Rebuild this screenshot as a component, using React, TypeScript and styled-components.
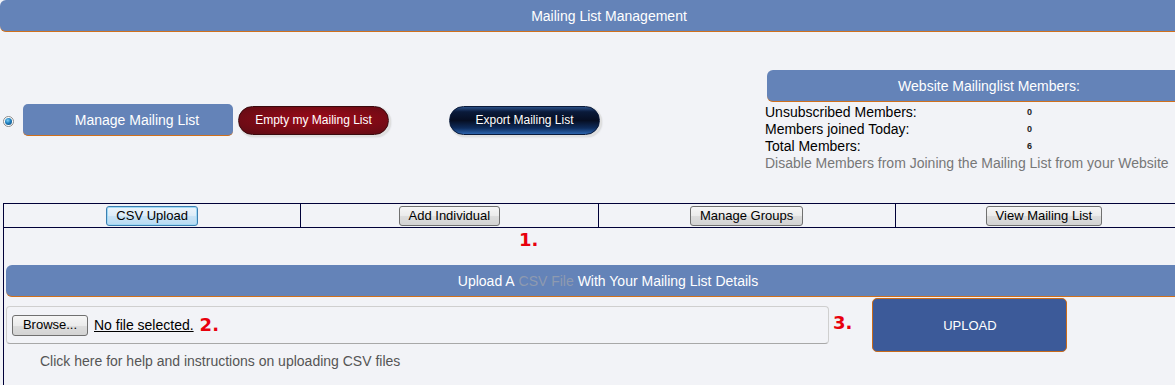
import React from "react";
import styled, { createGlobalStyle } from "styled-components";

const GlobalStyle = createGlobalStyle`
  html, body { margin: 0; padding: 0; background: #f2f3f7; overflow: hidden; }
  body { font-family: "Liberation Sans", Arial, sans-serif; color: #000; }
`;

const Page = styled.div`
  width: 1218px;
`;

const BlueBar = styled.div<{ $width?: number }>`
  box-sizing: border-box;
  width: ${(p) => (p.$width ? `${p.$width}px` : "100%")};
  height: 32px;
  background: #6483b8;
  border-bottom: 1px solid #d0701c;
  border-radius: 6px;
  color: #fff;
  font-size: 14px;
  display: flex;
  align-items: center;
  justify-content: center;
`;

const Muted = styled.span`
  color: #8e9ab0;
`;

const TopSection = styled.div`
  display: grid;
  grid-template-columns: 765px 1fr;
  height: 171px;
`;

const ActionGroup = styled.div`
  display: flex;
  align-items: center;
  align-self: start;
  margin-top: 72px;
  padding-left: 3px;
`;

const Radio = styled.span`
  box-sizing: border-box;
  width: 11px;
  height: 11px;
  border-radius: 50%;
  border: 1px solid #8a8a8a;
  background: #fff;
  display: flex;
  align-items: center;
  justify-content: center;
  margin-top: 3px;
  &::after {
    content: "";
    width: 7px;
    height: 7px;
    border-radius: 50%;
    background: radial-gradient(circle at 40% 35%, #7fd0f5 0%, #1f7fbf 45%, #0b3d6b 100%);
  }
`;

const ManageButton = styled.button`
  box-sizing: border-box;
  margin-left: 9px;
  width: 210px;
  height: 32px;
  border: none;
  border-bottom: 1px solid #d0701c;
  border-radius: 5px;
  background: #6483b8;
  color: #fff;
  font-family: inherit;
  font-size: 14px;
  padding: 0 0 0 18px;
`;

const PillButton = styled.button<{ $tone: "red" | "navy"; $gap: number }>`
  box-sizing: border-box;
  margin-left: ${(p) => p.$gap}px;
  width: 151px;
  height: 29px;
  border-radius: 15px;
  border: 1px solid ${(p) => (p.$tone === "red" ? "#3a0a0e" : "#0a1a3a")};
  box-shadow: 1px 1px 0 1px #e0e0e0, 2px 2px 2px rgba(0, 0, 0, 0.15);
  background: ${(p) =>
    p.$tone === "red"
      ? "radial-gradient(ellipse at 55% 45%, #9c0a1a 0%, #820a16 45%, #5a0c14 100%)"
      : "linear-gradient(to bottom, #2a4f86 0%, #0a1a3a 18%, #060e22 50%, #0e2c5c 78%, #2c64ae 100%)"};
  color: #fff;
  font-family: inherit;
  font-size: 12px;
  padding: 0;
`;

const StatsColumn = styled.div`
  display: flex;
  flex-direction: column;
`;

const StatsPanel = styled(BlueBar)`
  margin-top: 38px;
  margin-left: 2px;
  width: 444px;
`;

const StatsGrid = styled.div`
  display: grid;
  grid-template-columns: 262px auto;
  margin-top: 2px;
  font-size: 14px;
  line-height: 17px;
`;

const StatValue = styled.span`
  font-size: 9px;
  line-height: 17px;
  font-weight: bold;
  color: #222;
`;

const StatNote = styled.div`
  grid-column: 1 / span 2;
  color: #777;
  white-space: nowrap;
`;

const Tabs = styled.table`
  margin-left: 3px;
  width: 1190px;
  border-collapse: collapse;
  table-layout: fixed;
  border: 1px solid #000038;
`;

const TabCell = styled.td`
  border: 1px solid #000038;
  height: 23px;
  padding: 0;
  text-align: center;
  vertical-align: middle;
`;

const BodyCell = styled.td`
  border-left: 1px solid #000038;
  padding: 0 0 20px 2px;
  vertical-align: top;
`;

const SysButton = styled.button<{ $focused?: boolean }>`
  box-sizing: border-box;
  height: 20px;
  padding: 0 9px;
  border-radius: 3px;
  border: 1px solid ${(p) => (p.$focused ? "#3c7fb1" : "#707070")};
  box-shadow: ${(p) => (p.$focused ? "inset 0 0 0 1px #9fd8f5" : "none")};
  background: ${(p) =>
    p.$focused
      ? "linear-gradient(to bottom, #edf5fb 0%, #dcecf8 50%, #c9e3f5 51%, #b9dbf2 100%)"
      : "linear-gradient(to bottom, #f6f6f6 0%, #ebebeb 50%, #dddddd 51%, #d3d3d3 100%)"};
  font-family: inherit;
  font-size: 13px;
  color: #000;
  line-height: 18px;
  vertical-align: middle;
`;

const Marker = styled.span`
  font-family: "DejaVu Sans", Verdana, sans-serif;
  font-weight: bold;
  font-size: 18px;
  line-height: 18px;
  color: #e8000c;
`;

const MarkerRow = styled.div`
  height: 37px;
  padding: 3px 0 0 513px;
  box-sizing: border-box;
`;

const UploadRow = styled.div`
  display: flex;
  align-items: center;
  margin-top: 1px;
  height: 54px;
`;

const FileBox = styled.div`
  box-sizing: border-box;
  width: 823px;
  height: 38px;
  border: 1px solid #cfcfcf;
  border-bottom-color: #a8a8a8;
  border-radius: 4px;
  display: flex;
  align-items: center;
  padding-left: 5px;
  gap: 6px;
`;

const BrowseButton = styled(SysButton)`
  height: 21px;
  width: 76px;
  padding: 0;
`;

const FileName = styled.span`
  font-size: 14px;
  text-decoration: underline;
`;

const StepThree = styled(Marker)`
  margin-left: 4px;
  margin-top: -5px;
`;

const UploadButton = styled.button`
  box-sizing: border-box;
  margin-left: 20px;
  width: 195px;
  height: 54px;
  background: #3c5a99;
  border: 1px solid #c86a1a;
  border-radius: 5px;
  color: #fff;
  font-family: inherit;
  font-size: 13px;
`;

const HelpText = styled.div`
  margin-top: 1px;
  padding-left: 34px;
  font-size: 14px;
  line-height: 17px;
  color: #555;
`;

const stats: [string, string][] = [
  ["Unsubscribed Members:", "0"],
  ["Members joined Today:", "0"],
  ["Total Members:", "6"],
];

const tabs = ["CSV Upload", "Add Individual", "Manage Groups", "View Mailing List"];

export default function App() {
  return (
    <Page>
      <GlobalStyle />
      <BlueBar>Mailing List Management</BlueBar>
      <TopSection>
        <ActionGroup>
          <Radio />
          <ManageButton>Manage Mailing List</ManageButton>
          <PillButton $tone="red" $gap={5}>Empty my Mailing List</PillButton>
          <PillButton $tone="navy" $gap={60}>Export Mailing List</PillButton>
        </ActionGroup>
        <StatsColumn>
          <StatsPanel>Website Mailinglist Members:</StatsPanel>
          <StatsGrid>
            {stats.map(([label, value]) => (
              <React.Fragment key={label}>
                <span>{label}</span>
                <StatValue>{value}</StatValue>
              </React.Fragment>
            ))}
            <StatNote>Disable Members from Joining the Mailing List from your Website</StatNote>
          </StatsGrid>
        </StatsColumn>
      </TopSection>
      <Tabs>
        <tbody>
          <tr>
            {tabs.map((t, i) => (
              <TabCell key={t}>
                <SysButton $focused={i === 0}>{t}</SysButton>
              </TabCell>
            ))}
          </tr>
          <tr>
            <BodyCell colSpan={4}>
              <MarkerRow>
                <Marker>1.</Marker>
              </MarkerRow>
              <BlueBar $width={1204}>
                Upload A&nbsp;<Muted>CSV File</Muted>&nbsp;With Your Mailing List Details
              </BlueBar>
              <UploadRow>
                <FileBox>
                  <BrowseButton>Browse...</BrowseButton>
                  <FileName>No file selected.</FileName>
                  <Marker>2.</Marker>
                </FileBox>
                <StepThree>3.</StepThree>
                <UploadButton>UPLOAD</UploadButton>
              </UploadRow>
              <HelpText>Click here for help and instructions on uploading CSV files</HelpText>
            </BodyCell>
          </tr>
        </tbody>
      </Tabs>
    </Page>
  );
}
